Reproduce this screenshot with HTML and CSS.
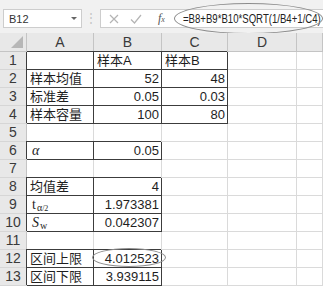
FILE: index.html
```html
<!DOCTYPE html>
<html lang="zh-CN">

<head>
    <meta charset="UTF-8">
    <meta name="viewport" content="width=device-width, initial-scale=1.0">
    <title>区间估计</title>
    <link rel="stylesheet" href="styles.css">
</head>

<body>

    <!-- 名称框 + 编辑栏 -->
    <div class="toolbar">
        <div class="namebox">
            <span>B12</span>
            <span class="caret"></span>
        </div>
        <div class="grip">⋮</div>
        <div class="fbar">
            <svg class="ico" width="10" height="10" viewBox="0 0 10 10">
                <path d="M1 1L9 9M9 1L1 9" stroke="#b4b4b4" stroke-width="1.2" fill="none" />
            </svg>
            <svg class="ico" width="12" height="10" viewBox="0 0 12 10">
                <path d="M1 5.5L4.5 9L11 1" stroke="#b4b4b4" stroke-width="1.2" fill="none" />
            </svg>
            <span class="fx"><i>f</i><small>x</small></span>
            <span class="formula">=B8+B9*B10*SQRT(1/B4+1/C4)</span>
        </div>
        <!-- 圈出公式 -->
        <div class="ring ring-formula"></div>
    </div>

    <div class="sheet">
        <div class="corner"><span class="tri"></span></div>
        <div class="colh">A</div>
        <div class="colh">B</div>
        <div class="colh">C</div>
        <div class="colh">D</div>
        <div class="colh"></div>

        <div class="rowh">1</div>
        <div class="c bx"></div>
        <div class="c bx">样本A</div>
        <div class="c bx">样本B</div>
        <div class="c"></div>
        <div class="c"></div>

        <div class="rowh">2</div>
        <div class="c bx">样本均值</div>
        <div class="c bx n">52</div>
        <div class="c bx n">48</div>
        <div class="c"></div>
        <div class="c"></div>

        <div class="rowh">3</div>
        <div class="c bx">标准差</div>
        <div class="c bx n">0.05</div>
        <div class="c bx n">0.03</div>
        <div class="c"></div>
        <div class="c"></div>

        <div class="rowh">4</div>
        <div class="c bx">样本容量</div>
        <div class="c bx n">100</div>
        <div class="c bx n">80</div>
        <div class="c"></div>
        <div class="c"></div>

        <div class="rowh">5</div>
        <div class="c"></div>
        <div class="c"></div>
        <div class="c"></div>
        <div class="c"></div>
        <div class="c"></div>

        <div class="rowh">6</div>
        <div class="c bx"><i class="sym">α</i></div>
        <div class="c bx n">0.05</div>
        <div class="c"></div>
        <div class="c"></div>
        <div class="c"></div>

        <div class="rowh">7</div>
        <div class="c"></div>
        <div class="c"></div>
        <div class="c"></div>
        <div class="c"></div>
        <div class="c"></div>

        <div class="rowh">8</div>
        <div class="c bx">均值差</div>
        <div class="c bx n">4</div>
        <div class="c"></div>
        <div class="c"></div>
        <div class="c"></div>

        <div class="rowh">9</div>
        <div class="c bx"><span class="sym">t</span><sub class="sub">α<small>/2</small></sub></div>
        <div class="c bx n">1.973381</div>
        <div class="c"></div>
        <div class="c"></div>
        <div class="c"></div>

        <div class="rowh">10</div>
        <div class="c bx"><i class="sym">S</i><sub class="sub">w</sub></div>
        <div class="c bx n">0.042307</div>
        <div class="c"></div>
        <div class="c"></div>
        <div class="c"></div>

        <div class="rowh">11</div>
        <div class="c"></div>
        <div class="c"></div>
        <div class="c"></div>
        <div class="c"></div>
        <div class="c"></div>

        <div class="rowh">12</div>
        <div class="c bx">区间上限</div>
        <div class="c bx n">4.012523</div>
        <div class="c"></div>
        <div class="c"></div>
        <div class="c"></div>

        <div class="rowh">13</div>
        <div class="c bx">区间下限</div>
        <div class="c bx n">3.939115</div>
        <div class="c"></div>
        <div class="c"></div>
        <div class="c"></div>

        <!-- 圈出结果 -->
        <div class="ring ring-cell"></div>
    </div>

</body>

</html>
```

FILE: styles.css
```css
body {
    margin: 0;
    background: #fff;
    font-family: "Liberation Sans", "Noto Sans CJK SC", sans-serif;
    color: #1e1e1e;
    overflow: hidden;
}

/* 顶部编辑栏 */
.toolbar {
    height: 33px;
    background: #f1f1f1;
    display: flex;
    align-items: flex-start;
    padding: 9px 0 0 3px;
    box-sizing: border-box;
    position: relative;
}

.namebox {
    flex: none;
    width: 79px;
    height: 19px;
    background: #fff;
    border: 1px solid #cdcdcd;
    box-sizing: border-box;
    display: flex;
    align-items: center;
    justify-content: space-between;
    padding: 0 4px 0 5px;
    font-size: 11px;
    color: #333;
}

.caret {
    width: 0;
    height: 0;
    border-left: 3px solid transparent;
    border-right: 3px solid transparent;
    border-top: 3px solid #666;
}

.grip {
    flex: none;
    width: 18px;
    text-align: center;
    color: #c4c4c4;
    font-size: 12px;
    line-height: 19px;
}

.fbar {
    flex: 1;
    min-width: 0;
    overflow: hidden;
    height: 19px;
    background: #fff;
    border: 1px solid #cdcdcd;
    border-right: 0;
    box-sizing: border-box;
    display: flex;
    align-items: center;
    padding-left: 8px;
}

.fbar .ico {
    flex: none;
    margin-right: 11px;
}

.fbar .ico + .ico {
    margin-right: 16px;
}

.fx {
    flex: none;
    font-family: "Liberation Serif", serif;
    font-size: 12px;
    color: #555;
    width: 20px;
}

.fx small {
    font-size: 8px;
    font-style: italic;
}

.formula {
    flex: none;
    display: inline-block;
    font-size: 12px;
    color: #222;
    transform: scaleX(.8);
    transform-origin: left center;
    white-space: nowrap;
    margin-left: 5px;
}

/* 手画的椭圆 */
.ring {
    position: absolute;
    border: 1px solid #8c8c8c;
    border-radius: 50%;
    pointer-events: none;
}

.ring-formula {
    left: 174px;
    top: 3px;
    width: 147px;
    height: 29px;
}

.ring-cell {
    left: 92px;
    top: 215px;
    width: 74px;
    height: 19px;
}

/* 表格 */
.sheet {
    position: relative;
    display: grid;
    grid-template-columns: 27px 67px 68px 66px 69px 1fr;
    grid-template-rows: 19px repeat(13, 18px);
}

.sheet > div {
    box-sizing: border-box;
}

.corner,
.colh,
.rowh {
    background: #e8e8e8;
    border-right: 1px solid #c4c4c4;
    border-bottom: 1px solid #c4c4c4;
    color: #3a3a3a;
    font-size: 14px;
    text-align: center;
}

.colh {
    line-height: 18px;
}

.rowh {
    line-height: 17px;
    border-bottom-color: #d6d6d6;
}

.corner {
    position: relative;
}

.corner .tri {
    position: absolute;
    right: 3px;
    bottom: 3px;
    width: 0;
    height: 0;
    border-left: 12px solid transparent;
    border-bottom: 12px solid #b7b7b7;
}

.c {
    border-right: 1px solid #dadada;
    border-bottom: 1px solid #dadada;
    font-size: 13px;
    line-height: 17px;
    padding: 0 3px;
    white-space: nowrap;
}

.c.n {
    text-align: right;
    padding-right: 2px;
}

/* 有框线的单元格 */
.c.bx {
    border-right-color: #3c3c3c;
    border-bottom-color: #3c3c3c;
    box-shadow: -1px -1px 0 #3c3c3c;
}

.sym {
    font-family: "Liberation Serif", serif;
    font-size: 14px;
    margin-left: 2px;
}

.sub {
    font-family: "Liberation Serif", serif;
    font-size: 10px;
    vertical-align: -2px;
    margin-left: 1px;
}

.sub small {
    font-size: 8px;
}
```
